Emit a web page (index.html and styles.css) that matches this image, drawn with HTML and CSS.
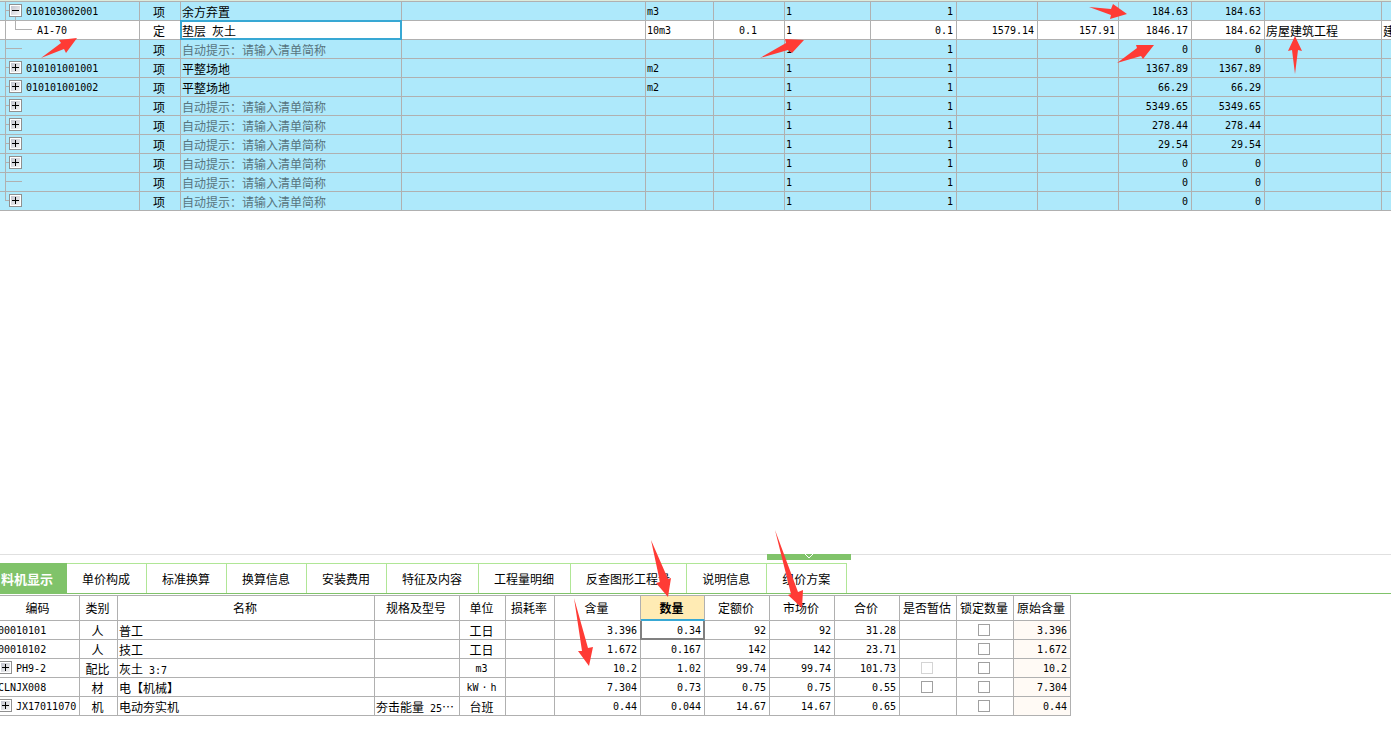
FILE: index.html
```html
<!DOCTYPE html>
<html lang="zh-CN">
<head>
<meta charset="utf-8">
<title>分部分项</title>
<link rel="stylesheet" href="styles.css">
</head>
<body>
<svg class="defs" width="0" height="0" aria-hidden="true">
  <defs>
    <linearGradient id="face" x1="0" y1="0" x2="1" y2="1"><stop offset="0" stop-color="#c4c6d0"/><stop offset="1" stop-color="#f4f4f4"/></linearGradient>
    <symbol id="minus" viewBox="0 0 13 13"><path fill="#909090" d="M0 0h13v13H0z"/><path fill="#fff" d="M1 1h11v11H1z"/><path fill="url(#face)" d="M2 2h9v9H2z"/><path d="M3 6h7v1H3z"/></symbol>
    <symbol id="plus" viewBox="0 0 13 13"><path fill="#909090" d="M0 0h13v13H0z"/><path fill="#fff" d="M1 1h11v11H1z"/><path fill="url(#face)" d="M2 2h9v9H2z"/><path d="M3 6h7v1H3zM6 3h1v7H6z"/></symbol>
    <symbol id="branch" viewBox="0 0 9 18"><path fill="#b0b0b0" d="M5 0h1v18H5zM6 8h3v1H6z"/></symbol>
    <symbol id="last" viewBox="0 0 9 18"><path fill="#b0b0b0" d="M5 0h1v9H5zM6 8h3v1H6z"/></symbol>
    <symbol id="leaf" viewBox="0 0 22 18"><path fill="#b0b0b0" d="M5 0h1v18H5zM6 8h16v1H6z"/></symbol>
  </defs>
</svg>

<main class="bill">
  <table class="grid bill-grid">
    <colgroup><col class="w-code"><col class="w-kind"><col class="w-name"><col class="w-spec"><col class="w-unit"><col class="w-rate"><col class="w-expr"><col class="w-expr"><col class="w-price"><col class="w-price"><col class="w-sum"><col class="w-sum"><col class="w-type"><col></colgroup>
    <tbody>
      <tr><td><div class="code"><svg width="9" height="18"><use href="#branch"/></svg><button class="toggle" aria-label="折叠"><svg width="13" height="13"><use href="#minus"/></svg></button><span class="n label">010103002001</span></div></td><td class="c">项</td><td>余方弃置</td><td></td><td class="n">m3</td><td></td><td class="n">1</td><td class="n r">1</td><td></td><td></td><td class="n r">184.63</td><td class="n r">184.63</td><td></td><td></td></tr>
      <tr class="current"><td><div class="code"><svg class="child" width="32" height="18"><path fill="#b0b0b0" d="M5 0h1v18H5zM15-4h1V9h-1zM16 8h16v1H16z"/></svg><span class="n label">A1-70</span></div></td><td class="c">定</td><td class="active">垫层<span class="n"> </span>灰土</td><td></td><td class="n">10m3</td><td class="n c">0.1</td><td class="n">1</td><td class="n r">0.1</td><td class="n r">1579.14</td><td class="n r">157.91</td><td class="n r">1846.17</td><td class="n r">184.62</td><td>房屋建筑工程</td><td>建</td></tr>
      <tr><td><div class="code"><svg width="22" height="18"><use href="#leaf"/></svg></div></td><td class="c">项</td><td class="hint">自动提示：请输入清单简称</td><td></td><td></td><td></td><td class="n">1</td><td class="n r">1</td><td></td><td></td><td class="n r">0</td><td class="n r">0</td><td></td><td></td></tr>
      <tr><td><div class="code"><svg width="9" height="18"><use href="#branch"/></svg><button class="toggle" aria-label="展开"><svg width="13" height="13"><use href="#plus"/></svg></button><span class="n label">010101001001</span></div></td><td class="c">项</td><td>平整场地</td><td></td><td class="n">m2</td><td></td><td class="n">1</td><td class="n r">1</td><td></td><td></td><td class="n r">1367.89</td><td class="n r">1367.89</td><td></td><td></td></tr>
      <tr><td><div class="code"><svg width="9" height="18"><use href="#branch"/></svg><button class="toggle" aria-label="展开"><svg width="13" height="13"><use href="#plus"/></svg></button><span class="n label">010101001002</span></div></td><td class="c">项</td><td>平整场地</td><td></td><td class="n">m2</td><td></td><td class="n">1</td><td class="n r">1</td><td></td><td></td><td class="n r">66.29</td><td class="n r">66.29</td><td></td><td></td></tr>
      <tr><td><div class="code"><svg width="9" height="18"><use href="#branch"/></svg><button class="toggle" aria-label="展开"><svg width="13" height="13"><use href="#plus"/></svg></button></div></td><td class="c">项</td><td class="hint">自动提示：请输入清单简称</td><td></td><td></td><td></td><td class="n">1</td><td class="n r">1</td><td></td><td></td><td class="n r">5349.65</td><td class="n r">5349.65</td><td></td><td></td></tr>
      <tr><td><div class="code"><svg width="9" height="18"><use href="#branch"/></svg><button class="toggle" aria-label="展开"><svg width="13" height="13"><use href="#plus"/></svg></button></div></td><td class="c">项</td><td class="hint">自动提示：请输入清单简称</td><td></td><td></td><td></td><td class="n">1</td><td class="n r">1</td><td></td><td></td><td class="n r">278.44</td><td class="n r">278.44</td><td></td><td></td></tr>
      <tr><td><div class="code"><svg width="9" height="18"><use href="#branch"/></svg><button class="toggle" aria-label="展开"><svg width="13" height="13"><use href="#plus"/></svg></button></div></td><td class="c">项</td><td class="hint">自动提示：请输入清单简称</td><td></td><td></td><td></td><td class="n">1</td><td class="n r">1</td><td></td><td></td><td class="n r">29.54</td><td class="n r">29.54</td><td></td><td></td></tr>
      <tr><td><div class="code"><svg width="9" height="18"><use href="#branch"/></svg><button class="toggle" aria-label="展开"><svg width="13" height="13"><use href="#plus"/></svg></button></div></td><td class="c">项</td><td class="hint">自动提示：请输入清单简称</td><td></td><td></td><td></td><td class="n">1</td><td class="n r">1</td><td></td><td></td><td class="n r">0</td><td class="n r">0</td><td></td><td></td></tr>
      <tr><td><div class="code"><svg width="22" height="18"><use href="#leaf"/></svg></div></td><td class="c">项</td><td class="hint">自动提示：请输入清单简称</td><td></td><td></td><td></td><td class="n">1</td><td class="n r">1</td><td></td><td></td><td class="n r">0</td><td class="n r">0</td><td></td><td></td></tr>
      <tr><td><div class="code"><svg width="9" height="18"><use href="#last"/></svg><button class="toggle" aria-label="展开"><svg width="13" height="13"><use href="#plus"/></svg></button></div></td><td class="c">项</td><td class="hint">自动提示：请输入清单简称</td><td></td><td></td><td></td><td class="n">1</td><td class="n r">1</td><td></td><td></td><td class="n r">0</td><td class="n r">0</td><td></td><td></td></tr>
    </tbody>
  </table>
</main>

<section class="detail">
  <button class="handle" aria-label="收起"><svg width="12" height="6" viewBox="0 0 12 6"><path d="M2 0l4 4 4-4" fill="none" stroke="#fff"/></svg></button>
  <nav class="tabs">
    <button class="tab selected">料机显示</button>
    <button class="tab">单价构成</button>
    <button class="tab">标准换算</button>
    <button class="tab">换算信息</button>
    <button class="tab">安装费用</button>
    <button class="tab">特征及内容</button>
    <button class="tab">工程量明细</button>
    <button class="tab">反查图形工程量</button>
    <button class="tab">说明信息</button>
    <button class="tab">组价方案</button>
  </nav>
  <table class="grid detail-grid">
    <colgroup><col class="d-code"><col class="d-kind"><col class="d-name"><col class="d-spec"><col class="d-unit"><col class="d-loss"><col class="d-content"><col class="d-qty"><col class="d-price"><col class="d-price"><col class="d-price"><col class="d-flag"><col class="d-flag"><col class="d-flag"></colgroup>
    <thead>
      <tr><th>编码</th><th>类别</th><th>名称</th><th>规格及型号</th><th>单位</th><th>损耗率</th><th>含量</th><th class="sorted">数量</th><th>定额价</th><th>市场价</th><th>合价</th><th>是否暂估</th><th>锁定数量</th><th>原始含量</th></tr>
    </thead>
    <tbody>
      <tr><td class="n">00010101</td><td class="c">人</td><td>普工</td><td></td><td class="c">工日</td><td></td><td class="n r">3.396</td><td class="n r focus">0.34</td><td class="n r">92</td><td class="n r">92</td><td class="n r">31.28</td><td></td><td class="c"><input type="checkbox" aria-label="锁定数量"></td><td class="n r orig">3.396</td></tr>
      <tr><td class="n">00010102</td><td class="c">人</td><td>技工</td><td></td><td class="c">工日</td><td></td><td class="n r">1.672</td><td class="n r">0.167</td><td class="n r">142</td><td class="n r">142</td><td class="n r">23.71</td><td></td><td class="c"><input type="checkbox" aria-label="锁定数量"></td><td class="n r orig">1.672</td></tr>
      <tr><td><div class="code"><button class="toggle" aria-label="展开"><svg width="13" height="13"><use href="#plus"/></svg></button><span class="n label">PH9-2</span></div></td><td class="c">配比</td><td>灰土<span class="n"> 3:7</span></td><td></td><td class="n c">m3</td><td></td><td class="n r">10.2</td><td class="n r">1.02</td><td class="n r">99.74</td><td class="n r">99.74</td><td class="n r">101.73</td><td class="c"><input type="checkbox" disabled aria-label="是否暂估"></td><td class="c"><input type="checkbox" aria-label="锁定数量"></td><td class="n r orig">10.2</td></tr>
      <tr><td class="n">CLNJX008</td><td class="c">材</td><td>电【机械】</td><td></td><td class="n c">kW<span class="dot">·</span>h</td><td></td><td class="n r">7.304</td><td class="n r">0.73</td><td class="n r">0.75</td><td class="n r">0.75</td><td class="n r">0.55</td><td class="c"><input type="checkbox" aria-label="是否暂估"></td><td class="c"><input type="checkbox" aria-label="锁定数量"></td><td class="n r orig">7.304</td></tr>
      <tr><td><div class="code"><button class="toggle" aria-label="展开"><svg width="13" height="13"><use href="#plus"/></svg></button><span class="n label">JX17011070</span></div></td><td class="c">机</td><td>电动夯实机</td><td>夯击能量<span class="n"> 25</span>…</td><td class="c">台班</td><td></td><td class="n r">0.44</td><td class="n r">0.044</td><td class="n r">14.67</td><td class="n r">14.67</td><td class="n r">0.65</td><td></td><td class="c"><input type="checkbox" aria-label="锁定数量"></td><td class="n r orig">0.44</td></tr>
    </tbody>
  </table>
</section>

<svg class="arrows" width="1391" height="733" aria-hidden="true">
  <path d="M41 58L61 43 59 40 77 38 66 53 64 49z"/>
  <path d="M760 58L786 43 785 39 804 40 792 53 788 50z"/>
  <path d="M1089 7L1111 9 1113 4 1127 14 1110 19 1111 15z"/>
  <path d="M1117 63L1137 48 1136 45 1154 45 1143 59 1141 56z"/>
  <path d="M1295 36L1302 51 1298 50 1295 74 1292 50 1288 51z"/>
  <path d="M651 540L668 579 671 578 668 597 656 583 660 582z"/>
  <path d="M574 598L588 648 593 647 589 666 578 651 582 651z"/>
  <path d="M775 530L798 592 803 590 802 608 788 595 791 594z"/>
</svg>
</body>
</html>
```
FILE: styles.css
```css
* { box-sizing: border-box; }

body {
  margin: 0;
  min-height: 100vh;
  display: flex;
  flex-direction: column;
  position: relative;
  overflow: hidden;
  background: #fff;
  color: #000;
  font: 12px/16px "Noto Sans CJK SC", sans-serif;
}

button { font: inherit; color: inherit; border: 0; padding: 0; background: none; }
svg { display: block; flex: none; }
.defs { position: absolute; }

/* shared grid look */
.grid { border-collapse: separate; border-spacing: 0; table-layout: fixed; }
.grid td, .grid th {
  height: 19px;
  padding: 1px 3px 0 1px;
  border-right: 1px solid #b0b0b0;
  border-bottom: 1px solid #b0b0b0;
  white-space: nowrap;
  overflow: hidden;
  text-align: left;
  font-weight: 400;
  vertical-align: middle;
}
.grid td:first-child { padding: 0; }
.grid .c { text-align: center; }
.grid .r { text-align: right; }
.n { font-family: "DejaVu Sans Mono", monospace; font-size: 10px; line-height: 10px; white-space: pre; }
.grid td.n { padding-top: 2px; line-height: 14px; }

.code { display: flex; align-items: center; height: 18px; }
.toggle { flex: none; width: 13px; height: 13px; margin-bottom: 1px; }
.label { padding: 2px 0 0 4px; line-height: 14px; }
.child { overflow: visible; }
.child + .label { padding-left: 5px; }

/* upper bill */
.bill { flex: 1; border-top: 1px solid #dceadb; }
.bill-grid { width: 100%; border-top: 1px solid #b0b0b0; }
.bill-grid tr { background: #aee9fb; }
.bill-grid tr.current { background: #fff; }
.bill-grid td:first-child { overflow: visible; }
.bill-grid td:last-child { border-right: 0; }
.hint { color: #58757e; }
.w-code { width: 140px; }
.w-kind { width: 41px; }
.w-name { width: 221px; }
.w-spec { width: 244px; }
.w-unit { width: 68px; }
.w-rate { width: 71px; }
.w-expr { width: 86px; }
.w-price { width: 81px; }
.w-sum { width: 73px; }
.w-type { width: 117px; }
.grid td.active { position: relative; overflow: visible; }
.active::after {
  content: "";
  position: absolute;
  inset: -1px;
  border: 2px solid #38a8d4;
}

/* lower detail */
.detail { position: relative; padding-bottom: 17px; border-top: 1px solid #e0e0e0; }
.handle {
  position: absolute;
  top: -1px;
  left: 767px;
  width: 84px;
  height: 6px;
  display: flex;
  justify-content: center;
  background: #80c36a;
}
.tabs {
  display: flex;
  margin-top: 8px;
  height: 31px;
  border-bottom: 1px solid #80c36a;
}
.tab {
  padding: 1px 16px 0 15px;
  border-top: 1px solid #b0e696;
  border-right: 1px solid #b0e696;
  white-space: nowrap;
}
.tab.selected {
  padding: 1px 13px 0 1px;
  border-color: #80c36a;
  background: #80c36a;
  color: #fff;
  font-size: 13px;
  font-weight: 700;
}
.detail-grid { width: 1073px; margin: 1px 0 0 -2px; border-top: 1px solid #b0b0b0; }
.grid th { height: 25px; padding: 0 2px 0 0; text-align: center; }
.grid th.sorted { font-weight: 700; background: #ffebb4; border-bottom: 2px solid #38a8d4; }
.grid td.focus { position: relative; overflow: visible; }
.focus::after {
  content: "";
  position: absolute;
  inset: 0 -1px -1px -1px;
  border: 2px solid #808080;
  border-top: 0;
}
.orig { background: #fffaf5; }
.detail-grid .toggle { margin-left: 1px; }
.dot { padding: 0 3px; }
.d-code { width: 82px; }
.d-kind { width: 38px; }
.d-name { width: 257px; }
.d-spec { width: 85px; }
.d-unit { width: 46px; }
.d-loss { width: 49px; }
.d-content { width: 86px; }
.d-qty { width: 64px; }
.d-price { width: 65px; }
.d-flag { width: 57px; }
input[type="checkbox"] {
  appearance: none;
  display: block;
  width: 12px;
  height: 12px;
  margin: 0 auto 2px;
  border: 1px solid #a0a0a0;
  background: #fff;
}
input[type="checkbox"]:disabled { border-color: #d4d4d4; }

.arrows { position: absolute; top: 0; left: 0; fill: #ff3b35; pointer-events: none; }
```
